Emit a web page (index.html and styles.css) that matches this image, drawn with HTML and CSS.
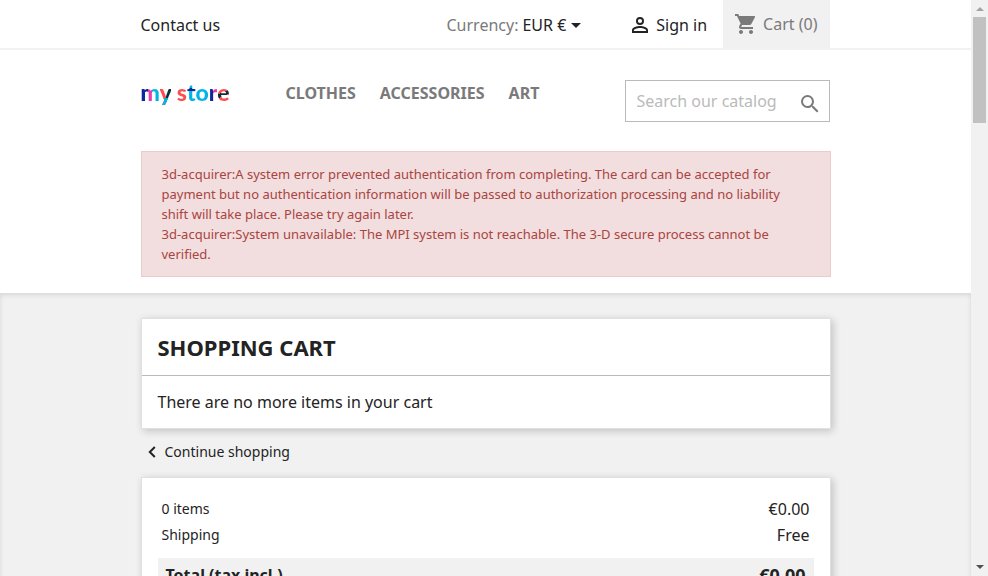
FILE: index.html
```html
<!DOCTYPE html>
<html lang="en">
<head>
<meta charset="utf-8">
<meta name="viewport" content="width=device-width, initial-scale=1">
<title>Cart</title>
<link rel="stylesheet" href="styles.css">
</head>
<body>
<div class="page">
  <header class="header">
    <nav class="topbar">
      <div class="container topbar-row">
        <a class="contact" href="#">Contact us</a>
        <div class="currency">
          <span class="muted" id="currency-label">Currency:</span>
          <button class="currency-button" type="button" aria-labelledby="currency-label currency-value">
            <span id="currency-value">EUR €</span>
            <svg class="caret" viewBox="0 0 10 5" aria-hidden="true"><path d="M0 0h10L5 5z"/></svg>
          </button>
        </div>
        <a class="signin" href="#">
          <svg class="icon-user" viewBox="3 3 18 18" aria-hidden="true"><path d="M12 5.900a2.100 2.100 0 1 1 0 4.200 2.100 2.100 0 0 1 0-4.200m0 9c2.970 0 6.100 1.460 6.100 2.100v1.100H5.900V17c0-.640 3.130-2.100 6.100-2.100M12 4a4 4 0 1 0 0 8 4 4 0 0 0 0-8zm0 9c-2.670 0-8 1.340-8 4v3h16v-3c0-2.660-5.330-4-8-4z"/></svg>
          <span>Sign in</span>
        </a>
        <a class="cart-link" href="#">
          <svg class="icon-cart" viewBox="0 0 24 24" aria-hidden="true"><path d="M7 18c-1.100 0-2 .9-2 2s.9 2 2 2 2-.9 2-2-.9-2-2-2zM1 2v2h2l3.600 7.590-1.350 2.450c-.16.280-.25.610-.25.960 0 1.100.9 2 2 2h12v-2H7.420c-.14 0-.25-.11-.25-.25l.03-.12.900-1.630h7.450c.75 0 1.410-.41 1.750-1.030l3.580-6.490A1 1 0 0 0 20 4H5.210l-.94-2H1zm16 16c-1.100 0-2 .9-2 2s.9 2 2 2 2-.9 2-2-.9-2-2-2z"/></svg>
          <span>Cart (0)</span>
        </a>
      </div>
    </nav>
    <div class="container header-main">
      <a class="logo" href="#" aria-label="my store"><span class="l-m">m</span><span class="l-y">y</span> <span class="l-s">s</span><span class="l-t">t</span><span class="l-o">o</span><span class="l-r">r</span><span class="l-e">e</span></a>
      <nav class="menu">
        <a href="#">CLOTHES</a>
        <a href="#">ACCESSORIES</a>
        <a href="#">ART</a>
      </nav>
      <form class="search">
        <input type="text" placeholder="Search our catalog" aria-label="Search">
        <button type="button" aria-label="Search">
          <svg viewBox="0 0 24 24" aria-hidden="true"><path d="M15.500 14h-.79l-.28-.27A6.470 6.470 0 0 0 16 9.500 6.500 6.500 0 1 0 9.500 16c1.610 0 3.090-.59 4.230-1.570l.27.28v.79l5 4.990L20.490 19l-4.990-5zm-6 0C7.010 14 5 11.990 5 9.500S7.010 5 9.500 5 14 7.010 14 9.500 11.990 14 9.500 14z"/></svg>
        </button>
      </form>
    </div>
    <div class="container">
      <div class="alert" role="alert">
        <p>3d-acquirer:A system error prevented authentication from completing. The card can be accepted for payment but no authentication information will be passed to authorization processing and no liability shift will take place. Please try again later.</p>
        <p>3d-acquirer:System unavailable: The MPI system is not reachable. The 3-D secure process cannot be verified.</p>
      </div>
    </div>
  </header>
  <main class="wrapper">
    <div class="container">
      <section class="card">
        <h1 class="card-title">SHOPPING CART</h1>
        <p class="card-body">There are no more items in your cart</p>
      </section>
      <a class="continue" href="#">
        <svg viewBox="0 0 8 12" aria-hidden="true"><path d="M6.800 1 1.800 6l5 5" fill="none" stroke="currentColor" stroke-width="2"/></svg>
        <span>Continue shopping</span>
      </a>
      <section class="card summary">
        <div class="line"><span class="label">0 items</span><span>€0.00</span></div>
        <div class="line"><span class="label">Shipping</span><span>Free</span></div>
        <div class="total"><span>Total (tax incl.)</span><span class="total-value">€0.00</span></div>
      </section>
    </div>
  </main>
</div>
<div class="scrollbar" aria-hidden="true">
  <svg class="arrow arrow-up" viewBox="0 0 8 4"><path d="M4 0l4 4H0z"/></svg>
  <div class="track"><div class="thumb"></div></div>
  <svg class="arrow" viewBox="0 0 8 4"><path d="M0 0h8L4 4z"/></svg>
</div>
</body>
</html>
```
FILE: styles.css
```css
* {
  box-sizing: border-box;
}

body {
  margin: 0;
  height: 100vh;
  display: flex;
  overflow: hidden;
  background: #fff;
  color: #232323;
  font: 16px/24px "Noto Sans", sans-serif;
}

a {
  color: inherit;
  text-decoration: none;
}

p,
h1 {
  margin: 0;
}

button,
input {
  font: inherit;
  color: inherit;
  border: 0;
  padding: 0;
  background: none;
}

svg {
  display: block;
  fill: currentColor;
  flex: none;
}

.page {
  flex: 1;
  min-width: 0;
  overflow: hidden;
  display: flex;
  flex-direction: column;
}

.container {
  width: 100%;
  max-width: 720px;
  margin: 0 auto;
  padding: 0 15px;
}

.header {
  padding-bottom: 16px;
}

.topbar {
  border-bottom: 2px solid #f1f1f1;
}

.topbar-row {
  display: flex;
  align-items: center;
  height: 48px;
  padding-right: 16px;
}

.contact,
.currency,
.signin {
  padding-top: 2px;
}

.contact {
  margin-right: auto;
}

.muted {
  color: #7a7a7a;
}

.currency {
  display: flex;
  gap: 4px;
  margin-right: 50px;
}

.currency-button {
  display: flex;
  align-items: center;
  gap: 5px;
}

.caret {
  width: 10px;
  height: 5px;
}

.signin {
  display: flex;
  align-items: center;
  gap: 7px;
  margin-right: 16px;
}

.icon-user {
  width: 18px;
  height: 18px;
}

.cart-link {
  display: flex;
  align-items: center;
  gap: 5px;
  height: 48px;
  padding: 0 12px 0 11px;
  background: #f1f1f1;
  color: #7a7a7a;
}

.icon-cart {
  width: 24px;
  height: 24px;
}

.header-main {
  display: flex;
  align-items: flex-start;
  padding-top: 30px;
  padding-right: 16px;
  padding-bottom: 29px;
}

.logo {
  width: 145px;
  font: 900 23px/24px Lato, sans-serif;
}

.logo span {
  color: transparent;
  -webkit-background-clip: text;
  background-clip: text;
}

.l-m {
  background-image: linear-gradient(90deg, #0a2a9c 38%, transparent 38%), linear-gradient(90deg, #e93cac 60%, #00b4e6 60%);
}

.l-y {
  background-image: linear-gradient(transparent 72%, #00b4e6 72%), linear-gradient(90deg, #ff4c4c 55%, #06303a 55%);
}

.l-s {
  background-image: linear-gradient(#ff4c4c, #ff4c4c);
}

.l-t {
  background-image: linear-gradient(#00b4e6 36%, #0a2a9c 36%, #0a2a9c 48%, #00b4e6 48%);
}

.l-o {
  background-image: linear-gradient(#00b4e6, #00b4e6);
}

.l-r {
  background-image: linear-gradient(90deg, #0a2a9c 50%, #e93cac 50%);
}

.l-e {
  background-image: linear-gradient(155deg, #ff4c4c 50%, #06303a 50%, #06303a 62%, #ff4c4c 62%);
}

.menu {
  display: flex;
  gap: 24px;
  padding-top: 1px;
  font-weight: 700;
  color: #7a7a7a;
}

.search {
  display: flex;
  align-items: center;
  width: 205px;
  height: 42px;
  margin-left: auto;
  padding: 0 7px 0 11px;
  border: 1px solid #bababa;
}

.search input {
  flex: 1;
  min-width: 0;
  outline: 0;
}

.search input::placeholder {
  color: #bababa;
  opacity: 1;
}

.search button {
  padding-top: 5px;
  color: #7a7a7a;
}

.search svg {
  width: 24px;
  height: 24px;
}

.alert {
  padding: 12px 20px;
  border: 1px solid #ebcccc;
  background: #f2dede;
  color: #a94442;
  font-size: 13px;
  line-height: 20px;
}

.wrapper {
  flex: 1 0 auto;
  padding-top: 25px;
  background: #f1f1f1;
  box-shadow: inset 0 2px 5px 0 rgba(0, 0, 0, .11);
}

.card {
  border: 1px solid #e0e0e0;
  background: #fff;
  box-shadow: 2px 2px 8px 0 rgba(0, 0, 0, .2);
}

.card-title {
  padding: 16px;
  border-bottom: 1px solid #bababa;
  font-size: 22px;
  line-height: 24px;
  font-weight: 700;
}

.card-body {
  padding: 14px 16px;
}

.continue {
  display: flex;
  align-items: center;
  gap: 9px;
  height: 46px;
  margin-bottom: 2px;
  padding-left: 7px;
  font-size: 14px;
}

.continue svg {
  width: 8px;
  height: 12px;
}

.summary {
  padding: 18px 16px;
}

.line {
  display: flex;
  justify-content: space-between;
  align-items: center;
  padding: 0 4px;
  line-height: 26px;
}

.label {
  font-size: 14px;
}

.total {
  display: flex;
  justify-content: space-between;
  margin-top: 10px;
  padding: 5px 8px;
  background: #f1f1f1;
  font-weight: 700;
}

.total-value {
  font-size: 18px;
}

.scrollbar {
  width: 17px;
  display: flex;
  flex-direction: column;
  align-items: center;
  padding: 7px 0;
  gap: 6px;
  background: #f1f1f1;
  color: #505050;
}

.arrow {
  width: 8px;
  height: 4px;
}

.arrow-up {
  color: #a3a3a3;
}

.track {
  flex: 1;
  width: 13px;
}

.thumb {
  height: 106px;
  background: #c1c1c1;
}
```
